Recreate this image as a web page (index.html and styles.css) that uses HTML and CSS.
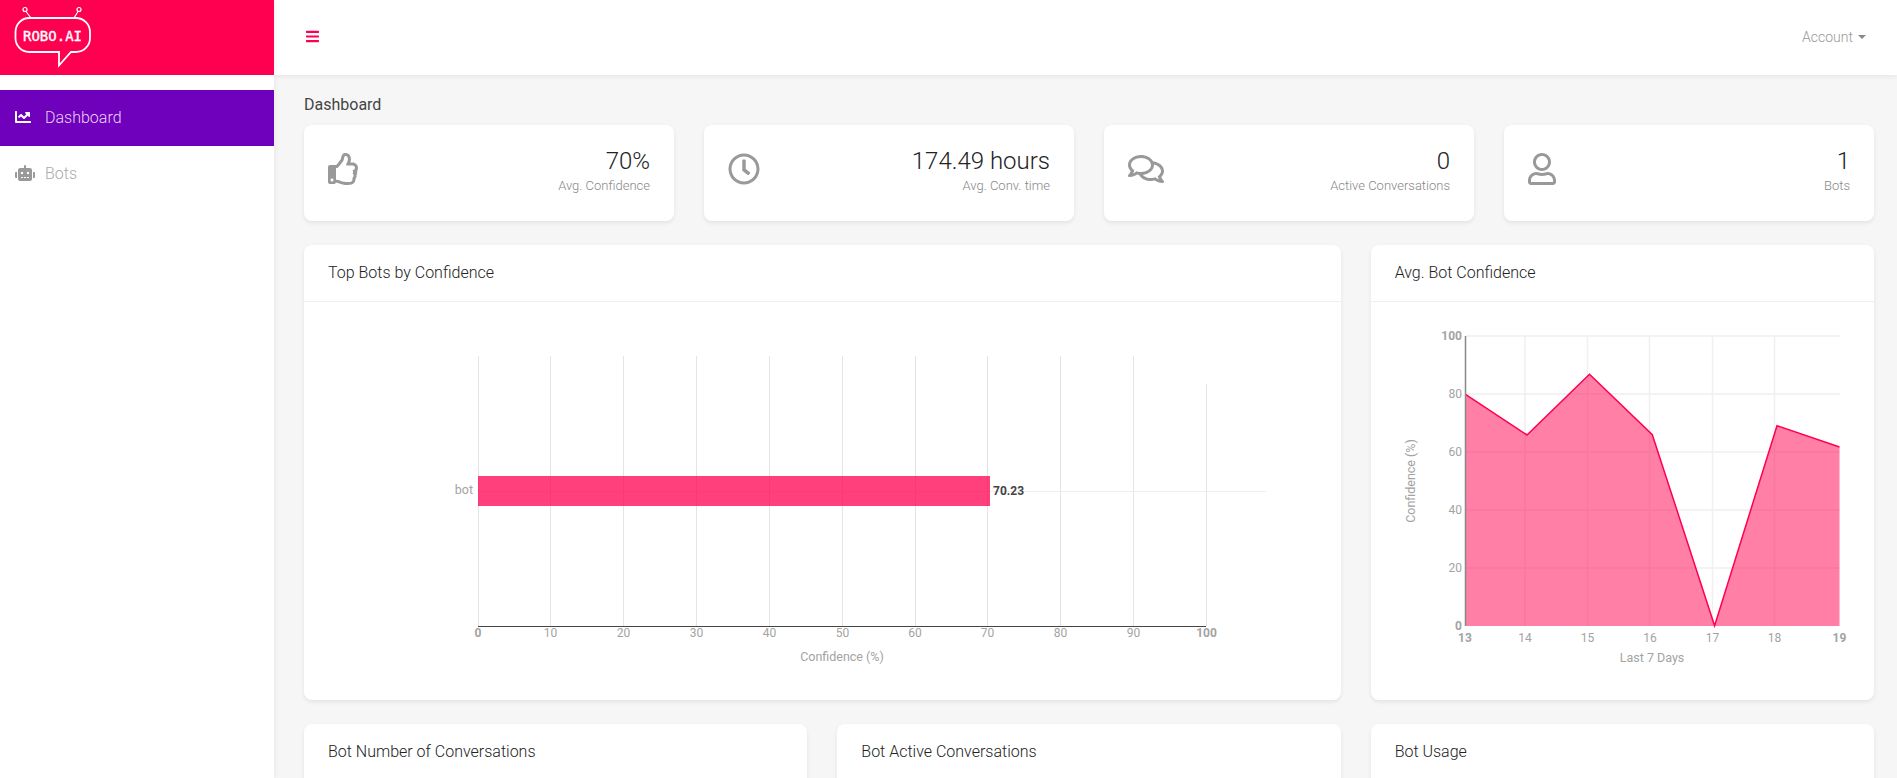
FILE: index.html
```html
<!DOCTYPE html>
<html lang="en">
<head>
    <meta charset="UTF-8">
    <meta name="viewport" content="width=device-width, initial-scale=1.0">
    <title>Dashboard</title>
    <link rel="stylesheet" href="styles.css">
</head>
<body>
    <aside class="sidebar">
        <div class="brand">
            <svg class="brand-logo" width="110" height="75" viewBox="0 0 110 75">
                <g fill="none" stroke="#fff" stroke-width="1.800">
                    <path d="M29 18H76A14 14 0 0 1 90 32V38A14 14 0 0 1 76 52H71L59 65.500V52H29A13.500 14 0 0 1 15.500 38V32A13.500 14 0 0 1 29 18Z"/>
                </g>
                <g fill="none" stroke="#fff" stroke-width="1.200">
                    <circle cx="25" cy="9.500" r="2"/>
                    <circle cx="79" cy="9.500" r="2"/>
                    <path d="M26 11.500L31 18M78 11.500L74 18"/>
                </g>
                <text class="brand-text" x="23" y="41" textLength="59" lengthAdjust="spacing">ROBO.AI</text>
            </svg>
        </div>
        <nav class="nav">
            <a class="nav-item active" href="#">
                <span class="nav-icon">
                    <svg width="16" height="16" viewBox="0 0 512 512"><path d="M496 384H64V80c0-8.840-7.160-16-16-16H16C7.160 64 0 71.160 0 80v336c0 17.670 14.330 32 32 32h464c8.840 0 16-7.160 16-16v-32c0-8.840-7.160-16-16-16zM464 96H345.940c-21.380 0-32.090 25.850-16.970 40.970l32.400 32.400L288 242.750l-73.370-73.370c-12.500-12.500-32.760-12.500-45.250 0l-68.690 68.690c-6.250 6.250-6.250 16.380 0 22.630l22.620 22.620c6.250 6.250 16.380 6.250 22.630 0L192 237.250l73.370 73.370c12.500 12.500 32.760 12.500 45.250 0l96-96 32.400 32.400c15.120 15.120 40.970 4.410 40.970-16.970V112c0-8.840-7.160-16-16-16z"/></svg>
                </span>
                Dashboard
            </a>
            <a class="nav-item" href="#">
                <span class="nav-icon">
                    <svg width="20" height="16" viewBox="0 0 640 512"><path d="M32,224H64V416H32A31.96166,31.96166,0,0,1,0,384V256A31.96166,31.96166,0,0,1,32,224Zm512-48V448a64.06328,64.06328,0,0,1-64,64H160a64.06328,64.06328,0,0,1-64-64V176a79.974,79.974,0,0,1,80-80H288V32a32,32,0,0,1,64,0V96H464A79.974,79.974,0,0,1,544,176ZM264,256a40,40,0,1,0-40,40A39.997,39.997,0,0,0,264,256Zm-8,128H192v32h64Zm96,0H288v32h64ZM456,256a40,40,0,1,0-40,40A39.997,39.997,0,0,0,456,256Zm-8,128H384v32h64ZM640,256V384a31.96166,31.96166,0,0,1-32,32H576V224h32A31.96166,31.96166,0,0,1,640,256Z"/></svg>
                </span>
                Bots
            </a>
        </nav>
    </aside>

    <div class="page">
        <header class="topbar">
            <button class="menu-toggle" type="button">
                <svg width="13" height="15" viewBox="0 0 448 512"><path d="M16 132h416c8.837 0 16-7.163 16-16V76c0-8.837-7.163-16-16-16H16C7.163 60 0 67.163 0 76v40c0 8.837 7.163 16 16 16zm0 160h416c8.837 0 16-7.163 16-16v-40c0-8.837-7.163-16-16-16H16c-8.837 0-16 7.163-16 16v40c0 8.837 7.163 16 16 16zm0 160h416c8.837 0 16-7.163 16-16v-40c0-8.837-7.163-16-16-16H16c-8.837 0-16 7.163-16 16v40c0 8.837 7.163 16 16 16z"/></svg>
            </button>
            <a class="account" href="#">Account<span class="caret"></span></a>
        </header>

        <main class="content">
            <h1 class="page-title">Dashboard</h1>

            <div class="row">
                <section class="card stat col-3">
                    <svg class="stat-icon" width="32" height="32" viewBox="0 0 512 512"><path d="M466.270 286.690C475.040 271.840 480 256 480 236.850c0-44.015-37.218-85.580-85.820-85.580H357.700c4.920-12.810 8.850-28.130 8.850-46.540C366.550 31.936 328.860 0 271.280 0c-61.607 0-58.093 94.933-71.760 108.600-22.747 22.747-49.615 66.447-68.760 83.400H32c-17.673 0-32 14.327-32 32v240c0 17.673 14.327 32 32 32h64c14.893 0 27.408-10.174 30.978-23.950 44.509 1.001 75.060 39.940 177.802 39.940 7.220 0 15.220.010 22.220.010 77.117 0 111.986-39.423 112.940-95.330 13.319-18.425 20.299-43.122 17.340-66.990 9.854-18.452 13.664-40.343 8.990-62.990zm-61.750 53.830c12.560 21.130 1.260 49.410-13.940 57.570 7.700 48.780-17.608 65.900-53.120 65.900h-37.820c-71.639 0-118.029-37.820-171.640-37.820V240h10.920c28.360 0 67.980-70.890 94.540-97.460 28.360-28.360 18.910-75.630 37.820-94.540 47.270 0 47.270 32.980 47.270 56.730 0 39.170-28.360 56.720-28.360 94.540h103.990c21.110 0 37.730 18.910 37.820 37.820.090 18.900-12.820 37.810-41.180 37.810 12.420 13.410 15.140 41.300 2.700 55.620zM88 432c0 13.255-10.745 24-24 24s-24-10.745-24-24 10.745-24 24-24 24 10.745 24 24z"/></svg>
                    <div class="stat-text">
                        <div class="stat-value">70%</div>
                        <div class="stat-label">Avg. Confidence</div>
                    </div>
                </section>
                <section class="card stat col-3">
                    <svg class="stat-icon" width="32" height="32" viewBox="0 0 512 512"><path d="M256 8C119 8 8 119 8 256s111 248 248 248 248-111 248-248S393 8 256 8zm0 448c-110.500 0-200-89.500-200-200S145.500 56 256 56s200 89.500 200 200-89.500 200-200 200zm61.800-104.400l-84.900-61.700c-3.100-2.300-4.900-5.900-4.900-9.700V116c0-6.600 5.400-12 12-12h32c6.600 0 12 5.400 12 12v141.700l66.800 48.600c5.400 3.900 6.500 11.400 2.600 16.800L334.600 349c-3.900 5.300-11.400 6.500-16.800 2.600z"/></svg>
                    <div class="stat-text">
                        <div class="stat-value">174.49 hours</div>
                        <div class="stat-label">Avg. Conv. time</div>
                    </div>
                </section>
                <section class="card stat col-3">
                    <svg class="stat-icon" width="36" height="32" viewBox="0 0 576 512"><path d="M532 386.200c27.500-27.100 44-61.100 44-98.200 0-80-76.500-146.100-176.200-157.900C368.300 72.500 294.300 32 208 32 93.100 32 0 103.600 0 192c0 37 16.500 71 44 98.200-15.300 30.700-37.300 54.500-37.700 54.900-6.300 6.700-8.100 16.500-4.400 25 3.600 8.500 12 14 21.200 14 53.500 0 96.700-20.200 125.200-38.800 9.200 2.100 18.700 3.700 28.400 4.900C208.100 407.600 281.800 448 368 448c20.800 0 40.800-2.400 59.800-6.800C456.300 459.700 499.400 480 553 480c9.200 0 17.500-5.500 21.200-14 3.600-8.500 1.900-18.300-4.400-25-.4-.3-22.500-24.100-37.800-54.800zm-392.800-92.300L122.100 305c-14.100 9.100-28.500 16.300-43.100 21.400 2.700-4.700 5.400-9.700 8-14.800l15.500-31.100L77.700 256C64.200 242.600 48 220.700 48 192c0-60.700 73.300-112 160-112s160 51.300 160 112-73.300 112-160 112c-16.500 0-33-1.900-49-5.600l-19.800-4.500zM498.300 352l-24.700 24.400 15.500 31.100c2.600 5.100 5.300 10.100 8 14.800-14.600-5.100-29-12.300-43.100-21.400l-17.100-11.100-19.900 4.600c-16 3.700-32.500 5.600-49 5.600-54 0-102.200-20.100-131.300-49.700C338 339.500 416 272.900 416 192c0-3.400-.4-6.700-.7-10C479.700 196.500 528 238.800 528 288c0 28.700-16.200 50.600-29.700 64z"/></svg>
                    <div class="stat-text">
                        <div class="stat-value">0</div>
                        <div class="stat-label">Active Conversations</div>
                    </div>
                </section>
                <section class="card stat col-3">
                    <svg class="stat-icon" width="28" height="32" viewBox="0 0 448 512"><path d="M313.600 304c-28.700 0-42.500 16-89.600 16-47.100 0-60.800-16-89.600-16C60.200 304 0 364.200 0 438.400V464c0 26.500 21.500 48 48 48h352c26.500 0 48-21.500 48-48v-25.600c0-74.200-60.200-134.400-134.400-134.400zM400 464H48v-25.600c0-47.600 38.800-86.400 86.400-86.400 14.600 0 38.300 16 89.600 16 51.700 0 74.900-16 89.600-16 47.600 0 86.400 38.800 86.400 86.400V464zM224 288c79.500 0 144-64.500 144-144S303.500 0 224 0 80 64.500 80 144s64.500 144 144 144zm0-240c52.900 0 96 43.100 96 96s-43.100 96-96 96-96-43.100-96-96 43.100-96 96-96z"/></svg>
                    <div class="stat-text">
                        <div class="stat-value">1</div>
                        <div class="stat-label">Bots</div>
                    </div>
                </section>
            </div>

            <div class="row">
                <section class="card col-8">
                    <h2 class="card-title">Top Bots by Confidence</h2>
                    <svg class="chart" width="1037" height="398" viewBox="304 302 1037 398">
                        <g class="grid-v">
                            <path d="M478.500 356V626M550.500 356V626M623.500 356V626M696.500 356V626M769.500 356V626M842.500 356V626M915.500 356V626M987.500 356V626M1060.500 356V626M1133.500 356V626M1206.500 384V626"/>
                        </g>
                        <path class="grid-h" d="M478 491.500H1266"/>
                        <rect class="bar" x="478" y="476" width="512" height="30"/>
                        <path class="axis-dark" d="M478 626.500H1206"/>
                        <text class="bar-value" x="993" y="495">70.23</text>
                        <text class="tick label end" x="473" y="494">bot</text>
                        <g class="tick middle">
                            <text class="edge" x="478" y="637">0</text>
                            <text x="550.500" y="637">10</text>
                            <text x="623.500" y="637">20</text>
                            <text x="696.500" y="637">30</text>
                            <text x="769.500" y="637">40</text>
                            <text x="842.500" y="637">50</text>
                            <text x="915" y="637">60</text>
                            <text x="987.500" y="637">70</text>
                            <text x="1060.500" y="637">80</text>
                            <text x="1133.500" y="637">90</text>
                            <text class="edge" x="1206.500" y="637">100</text>
                        </g>
                        <text class="tick label middle" x="842" y="661">Confidence (%)</text>
                    </svg>
                </section>
                <section class="card col-4">
                    <h2 class="card-title">Avg. Bot Confidence</h2>
                    <svg class="chart" width="503" height="398" viewBox="1371 302 503 398">
                        <path class="grid-soft" d="M1466 336H1840M1466 394H1840M1466 452H1840M1466 510H1840M1466 568H1840M1525 336V626M1587.500 336V626M1649.500 336V626M1712.500 336V626M1774.500 336V626"/>
                        <path class="area" d="M1465.500 394.300L1527 435L1589.500 374.300L1652.300 434.700L1714.600 625.700L1777 425.700L1839.500 447V626H1465.500Z"/>
                        <path class="area-line" d="M1465.500 394.300L1527 435L1589.500 374.300L1652.300 434.700L1714.600 625.700L1777 425.700L1839.500 447"/>
                        <path class="axis-grey" d="M1465.500 336V626"/>
                        <g class="tick end">
                            <text class="edge" x="1462" y="340">100</text>
                            <text x="1462" y="398">80</text>
                            <text x="1462" y="456">60</text>
                            <text x="1462" y="514">40</text>
                            <text x="1462" y="572">20</text>
                            <text class="edge" x="1462" y="630">0</text>
                        </g>
                        <g class="tick middle">
                            <text class="edge" x="1465" y="642">13</text>
                            <text x="1525" y="642">14</text>
                            <text x="1587.500" y="642">15</text>
                            <text x="1650" y="642">16</text>
                            <text x="1712.500" y="642">17</text>
                            <text x="1774.500" y="642">18</text>
                            <text class="edge" x="1839.500" y="642">19</text>
                        </g>
                        <text class="tick label middle" x="1652" y="662">Last 7 Days</text>
                        <text class="tick label middle" transform="translate(1415 481) rotate(-90)">Confidence (%)</text>
                    </svg>
                </section>
            </div>

            <div class="row">
                <section class="card col-4">
                    <h2 class="card-title">Bot Number of Conversations</h2>
                    <div class="chart-empty"></div>
                </section>
                <section class="card col-4">
                    <h2 class="card-title">Bot Active Conversations</h2>
                    <div class="chart-empty"></div>
                </section>
                <section class="card col-4">
                    <h2 class="card-title">Bot Usage</h2>
                    <div class="chart-empty"></div>
                </section>
            </div>
        </main>
    </div>
</body>
</html>
```

FILE: styles.css
```css
html, body {
    height: 100%;
    overflow: hidden;
}

body {
    margin: 0;
    display: flex;
    font-family: Roboto, "Liberation Sans", sans-serif;
    font-size: 16px;
    color: #333;
    background-color: #f6f6f6;
}

/* sidebar */
.sidebar {
    flex: 0 0 274px;
    background-color: #fff;
    box-shadow: 0 0 6px rgba(0, 0, 0, .08);
    z-index: 2;
}

.brand {
    height: 75px;
    background-color: #ff0050;
}

.brand-logo {
    display: block;
}

.brand-text {
    font-family: "DejaVu Sans Mono", monospace;
    font-size: 14px;
    fill: #fff;
    stroke: #fff;
    stroke-width: .35;
}

.nav {
    padding-top: 15px;
}

.nav-item {
    display: flex;
    align-items: center;
    height: 56px;
    box-sizing: border-box;
    padding: 0 0 2px 15px;
    font-weight: 300;
    color: #aaa;
    text-decoration: none;
}

.nav-item.active {
    background-color: #6f00bb;
    color: #e8d5f5;
}

.nav-icon {
    display: flex;
    width: 30px;
    fill: #999;
}

.active .nav-icon {
    fill: #fff;
}

/* top bar */
.page {
    flex: 1;
    min-width: 0;
}

.topbar {
    display: flex;
    align-items: center;
    justify-content: space-between;
    height: 75px;
    box-sizing: border-box;
    padding: 0 31px 2px 32px;
    background-color: #fff;
    box-shadow: 0 1px 6px rgba(0, 0, 0, .08);
}

.menu-toggle {
    display: flex;
    padding: 0;
    border: 0;
    background: none;
    fill: #ff0050;
}

.account {
    font-size: 14px;
    font-weight: 300;
    color: #999;
    text-decoration: none;
}

.caret {
    display: inline-block;
    margin-left: 5px;
    vertical-align: 3px;
    border-top: 4.200px solid #888;
    border-left: 4.200px solid transparent;
    border-right: 4.200px solid transparent;
}

/* content */
.content {
    padding: 18px 23px 0 30px;
}

.page-title {
    margin: 0 0 8px;
    font-size: 16px;
    font-weight: 400;
    line-height: 24px;
    color: #444;
}

.row {
    display: grid;
    grid-template-columns: repeat(12, 1fr);
    column-gap: 30px;
    margin-bottom: 24px;
}

.col-3 {
    grid-column: span 3;
}

.col-4 {
    grid-column: span 4;
}

.col-8 {
    grid-column: span 8;
}

.card {
    background-color: #fff;
    border-radius: 8px;
    box-shadow: 0 2px 4px rgba(0, 0, 0, .08);
}

.card-title {
    margin: 0;
    padding: 0 24px;
    font-size: 16px;
    font-weight: 300;
    line-height: 56px;
    color: #222;
    border-bottom: 1px solid #eee;
}

/* stat cards */
.stat {
    display: flex;
    justify-content: space-between;
    height: 96px;
    padding: 20px 24px 0;
    box-sizing: border-box;
}

.stat-icon {
    margin-top: 8px;
    fill: #999;
}

.stat-text {
    text-align: right;
}

.stat-value {
    font-size: 24px;
    font-weight: 300;
    line-height: 32px;
    color: #222;
}

.stat-label {
    font-size: 13px;
    font-weight: 300;
    line-height: 18px;
    color: #888;
}

/* charts */
.chart {
    display: block;
}

.chart-empty {
    height: 300px;
}

.grid-v path {
    stroke: #e4e4e4;
    fill: none;
}

.grid-h {
    stroke: #eee;
    fill: none;
}

.grid-soft {
    stroke: #f0f0f0;
    stroke-width: 1.5;
    fill: none;
}

.bar {
    fill: rgba(255, 0, 80, .75);
}

.area {
    fill: rgba(255, 0, 80, .5);
}

.area-line {
    stroke: #ff0050;
    stroke-width: 1.5;
    fill: none;
}

.axis-dark {
    stroke: #444;
    fill: none;
}

.axis-grey {
    stroke: #888;
    stroke-width: 1.5;
    fill: none;
}

.tick {
    font-size: 12px;
    fill: #a3a3a3;
}

.tick.label {
    font-size: 12.500px;
}

.tick .edge {
    font-weight: 700;
}

.middle {
    text-anchor: middle;
}

.end {
    text-anchor: end;
}

.bar-value {
    font-size: 12px;
    font-weight: 700;
    fill: #444;
}
```
